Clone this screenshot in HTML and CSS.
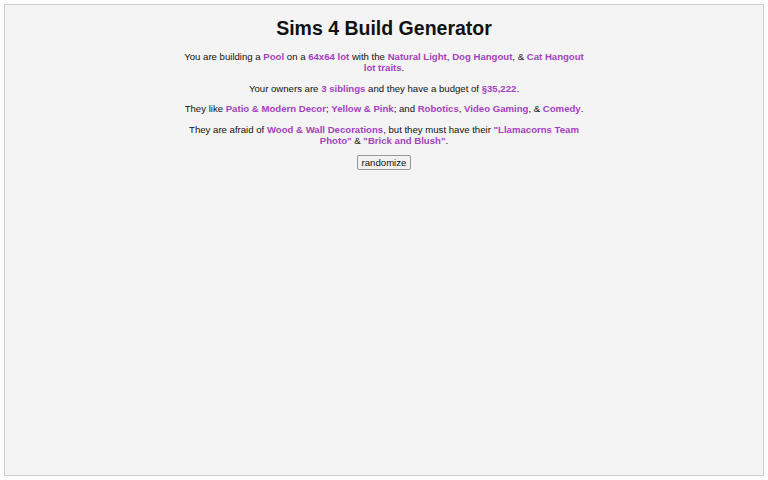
FILE: index.html
```html
<!DOCTYPE html>
<html lang="en">

<head>
  <meta charset="UTF-8" />
  <meta name="viewport" content="width=device-width, initial-scale=1" />
  <title>Sims 4 Build Generator</title>
  <link rel="stylesheet" href="styles.css">
</head>

<body>
  <div id="wrap">
    <h1>Sims 4 Build Generator</h1>
    <div id="prompt">
      <p>You are building a <b>Pool</b> on a <b>64x64 lot</b> with the <b>Natural Light</b>, <b>Dog Hangout</b>, &amp; <b>Cat Hangout lot traits</b>.</p>
      <p>Your owners are <b>3 siblings</b> and they have a budget of <b>§35,222</b>.</p>
      <p>They like <b>Patio &amp; Modern Decor</b>; <b>Yellow &amp; Pink</b>; and <b>Robotics</b>, <b>Video Gaming</b>, &amp; <b>Comedy</b>.</p>
      <p>They are afraid of <b>Wood &amp; Wall Decorations</b>, but they must have their <b>"Llamacorns Team Photo"</b> &amp; <b>"Brick and Blush"</b>.</p>
    </div>
    <button id="randomBtn">randomize</button>
  </div>
</body>

</html>
```

FILE: styles.css
```css
* {
  box-sizing: border-box;
}

html,
body {
  height: 100%;
}

body {
  margin: 0;
  padding: 4px;
  background: #fdfdfd;
  font-family: 'Liberation Sans', Arial, sans-serif;
  color: #111;
}

#wrap {
  height: 472px;
  border: 1px solid #cfcfcf;
  background: #f4f4f4;
  display: flex;
  flex-direction: column;
  align-items: center;
  padding-top: 12px;
}

h1 {
  margin: 0 0 11px;
  font-size: 19.5px;
  line-height: 23px;
}

#prompt {
  width: 404px;
  text-align: center;
  font-size: 9.6px;
  line-height: 11px;
}

#prompt p {
  margin: 0 0 9.5px;
}

#prompt b {
  color: #a441c0;
}

#randomBtn {
  margin-top: 0;
  font-family: 'Liberation Sans', Arial, sans-serif;
  font-size: 9.6px;
  padding: 1px 4px;
  background: #f2f2f2;
  border: 1px solid #999;
  border-radius: 2px;
  color: #111;
}
```
